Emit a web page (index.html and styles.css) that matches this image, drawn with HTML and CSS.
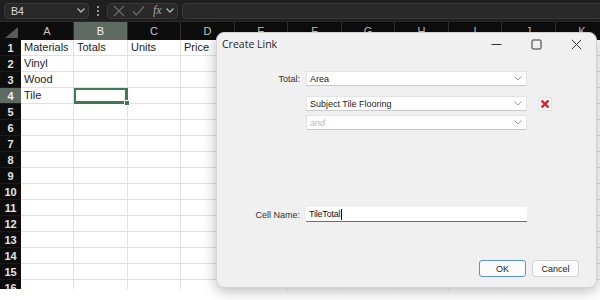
FILE: index.html
```html
<!DOCTYPE html>
<html lang="en">
<head>
    <meta charset="UTF-8">
    <meta name="viewport" content="width=device-width, initial-scale=1.0">
    <title>Create Link</title>
    <link rel="stylesheet" href="styles.css">
</head>
<body>
    <div class="app">
        <!-- Строка формул -->
        <div class="formula-bar">
            <div class="name-box">
                <span>B4</span>
                <svg class="chevron" width="8" height="5" viewBox="0 0 8 5"><path d="M0.5 0.5 L4 4 L7.5 0.5" fill="none" stroke="#b5b5b5" stroke-width="1.3"/></svg>
            </div>
            <div class="more-dots"><i></i><i></i><i></i></div>
            <div class="edit-box">
                <svg width="12" height="12" viewBox="0 0 12 12"><path d="M1 1 L11 11 M11 1 L1 11" stroke="#6a6a6a" stroke-width="1.3"/></svg>
                <svg width="13" height="12" viewBox="0 0 13 12"><path d="M1 6.5 L4.5 10 L12 1.5" fill="none" stroke="#6a6a6a" stroke-width="1.3"/></svg>
                <span class="fx">fx</span>
                <svg class="chevron" width="8" height="5" viewBox="0 0 8 5"><path d="M0.5 0.5 L4 4 L7.5 0.5" fill="none" stroke="#b5b5b5" stroke-width="1.3"/></svg>
            </div>
            <div class="formula-input"></div>
        </div>

        <!-- Лист -->
        <div class="sheet" id="sheet"></div>

        <!-- Диалог -->
        <div class="dialog">
            <div class="dialog-title">
                <span class="dialog-name">Create Link</span>
                <div class="window-controls">
                    <span><svg width="11" height="11" viewBox="0 0 11 11"><path d="M0.5 5.5 H10.5" stroke="#333" stroke-width="1"/></svg></span>
                    <span><svg width="11" height="11" viewBox="0 0 11 11"><rect x="1" y="1" width="9" height="9" rx="1" fill="none" stroke="#333" stroke-width="1"/></svg></span>
                    <span><svg width="11" height="11" viewBox="0 0 11 11"><path d="M0.8 0.8 L10.2 10.2 M10.2 0.8 L0.8 10.2" stroke="#333" stroke-width="1"/></svg></span>
                </div>
            </div>

            <div class="dialog-body">
                <div class="form-row">
                    <label>Total:</label>
                    <div class="select">
                        <span>Area</span>
                        <svg width="8" height="5" viewBox="0 0 8 5"><path d="M0.5 0.5 L4 4 L7.5 0.5" fill="none" stroke="#999" stroke-width="1"/></svg>
                    </div>
                </div>
                <div class="form-row criteria">
                    <span></span>
                    <div class="select">
                        <span>Subject Tile Flooring</span>
                        <svg width="8" height="5" viewBox="0 0 8 5"><path d="M0.5 0.5 L4 4 L7.5 0.5" fill="none" stroke="#999" stroke-width="1"/></svg>
                    </div>
                    <span class="remove">
                        <svg width="10" height="10" viewBox="0 0 10 10"><path d="M1.5 1.5 L8.5 8.5 M8.5 1.5 L1.5 8.5" stroke="#d4202a" stroke-width="2.4"/></svg>
                    </span>
                </div>
                <div class="form-row and-row">
                    <span></span>
                    <div class="select placeholder">
                        <span>and</span>
                        <svg width="8" height="5" viewBox="0 0 8 5"><path d="M0.5 0.5 L4 4 L7.5 0.5" fill="none" stroke="#999" stroke-width="1"/></svg>
                    </div>
                </div>
                <div class="form-row name-row">
                    <label>Cell Name:</label>
                    <div class="text-input">TileTotal<span class="caret"></span></div>
                </div>
            </div>

            <div class="dialog-actions">
                <button class="btn primary">OK</button>
                <button class="btn">Cancel</button>
            </div>
        </div>
    </div>

    <script>
        const letters = ['A', 'B', 'C', 'D', 'E', 'F', 'G', 'H', 'I', 'J', 'K'];
        const data = {
            1: ['Materials', 'Totals', 'Units', 'Price'],
            2: ['Vinyl'],
            3: ['Wood'],
            4: ['Tile']
        };
        const sheet = document.getElementById('sheet');

        // Заголовки столбцов
        const corner = document.createElement('div');
        corner.className = 'corner';
        corner.innerHTML = '<svg width="13" height="11" viewBox="0 0 13 11"><polygon points="13,0 13,11 0,11" fill="#5a5a5a"/></svg>';
        sheet.appendChild(corner);
        letters.forEach(l => {
            const h = document.createElement('div');
            h.className = 'col-head' + (l === 'B' ? ' active' : '');
            h.textContent = l;
            sheet.appendChild(h);
        });

        // Строки
        for (let r = 1; r <= 16; r++) {
            const rh = document.createElement('div');
            rh.className = 'row-head' + (r === 4 ? ' active' : '');
            rh.textContent = r;
            sheet.appendChild(rh);
            letters.forEach((l, i) => {
                const c = document.createElement('div');
                c.className = 'cell';
                if (r === 4 && l === 'B') c.classList.add('selected');
                const values = data[r] || [];
                if (values[i]) c.textContent = values[i];
                sheet.appendChild(c);
            });
        }
    </script>
</body>
</html>
```

FILE: styles.css
```css
body {
    margin: 0;
    background: #fff;
    font-family: "Liberation Sans", Arial, sans-serif;
    overflow: hidden;
}

.app {
    position: relative;
    width: 600px;
    height: 300px;
    overflow: hidden;
}

/* Строка формул */
.formula-bar {
    height: 21px;
    background: #1f1f1f;
    border-bottom: 1px solid #2b2b2b;
    display: flex;
    align-items: center;
    padding-left: 4px;
}

.name-box,
.edit-box,
.formula-input {
    height: 16px;
    box-sizing: border-box;
    background: #292929;
    border: 1px solid #3a3a3a;
    border-radius: 4px;
    display: flex;
    align-items: center;
}

.name-box {
    width: 85px;
    padding: 0 3px 0 6px;
    justify-content: space-between;
    color: #dcdcdc;
    font-size: 10.5px;
}

.more-dots {
    width: 18px;
    display: flex;
    flex-direction: column;
    align-items: center;
    gap: 2px;
}

.more-dots i {
    width: 2px;
    height: 2px;
    background: #bdbdbd;
    border-radius: 50%;
}

.edit-box {
    width: 71px;
    padding: 0 3px 0 5px;
    gap: 7px;
}

.fx {
    font-family: "Liberation Serif", serif;
    font-style: italic;
    font-size: 12px;
    color: #a8a8a8;
    margin-left: 1px;
    margin-right: -3px;
}

.formula-input {
    flex: 1;
    margin-left: 4px;
    margin-right: -10px;
}

/* Лист */
.sheet {
    display: grid;
    grid-template-columns: 21px 53px 54px 53px 54px 53px 54px 53px 54px 53px 54px 53px;
    grid-template-rows: 18px repeat(16, 16px);
    height: 267px;
    overflow: hidden;
}

.corner {
    background: #0d0d0d;
    display: flex;
    align-items: flex-end;
    justify-content: flex-end;
    padding: 0 3px 2px 0;
}

.col-head {
    background: #0d0d0d;
    border-right: 1px solid #2e2e2e;
    color: #c4c4c4;
    font-size: 11px;
    display: flex;
    align-items: center;
    justify-content: center;
}

.row-head {
    background: #0d0d0d;
    border-bottom: 1px solid #1c1c1c;
    color: #e4e4e4;
    font-size: 11px;
    font-weight: bold;
    display: flex;
    align-items: center;
    justify-content: center;
}

.col-head.active,
.row-head.active {
    background: #5e6a62;
    color: #f2f2f2;
}

.cell {
    box-sizing: border-box;
    border-right: 1px solid #e1e1e1;
    border-bottom: 1px solid #e1e1e1;
    padding-left: 3px;
    font-size: 11px;
    line-height: 15px;
    color: #222;
    white-space: nowrap;
}

.cell.selected {
    position: relative;
    box-shadow: inset 0 0 0 2px #3f7a56;
    border-color: #3f7a56;
}

.cell.selected::after {
    content: "";
    position: absolute;
    right: -3px;
    bottom: -3px;
    width: 4px;
    height: 4px;
    background: #3f7a56;
    border: 1px solid #fff;
}

/* Диалог */
.dialog {
    position: absolute;
    left: 216px;
    top: 32px;
    width: 381px;
    height: 256px;
    box-sizing: border-box;
    background: #f0f0f0;
    border: 1px solid #d2d2d2;
    border-radius: 8px;
    box-shadow: 0 3px 14px rgba(0, 0, 0, 0.28);
    display: flex;
    flex-direction: column;
    color: #222;
}

.dialog-title {
    height: 22px;
    display: flex;
    align-items: center;
    justify-content: space-between;
    padding-left: 5px;
}

.dialog-name {
    font-family: "Open Sans", sans-serif;
    font-size: 10.5px;
    color: #262626;
}

.window-controls {
    display: flex;
    align-self: stretch;
}

.window-controls span {
    width: 40px;
    display: flex;
    align-items: center;
    justify-content: center;
}

.dialog-body {
    padding-top: 16px;
}

.form-row {
    display: grid;
    grid-template-columns: 83px 221px 24px;
    column-gap: 6px;
    align-items: center;
    font-size: 9px;
}

.form-row label {
    text-align: right;
    color: #333;
}

.select {
    height: 15px;
    box-sizing: border-box;
    background: #fff;
    border: 1px solid #e4e4e4;
    border-bottom-color: #c9c9c9;
    display: flex;
    align-items: center;
    justify-content: space-between;
    padding: 0 4px 0 3px;
    color: #1a1a1a;
}

.select.placeholder span {
    color: #b9b9b9;
    font-style: italic;
}

.criteria {
    margin-top: 10px;
}

.and-row {
    margin-top: 4px;
}

.remove {
    justify-self: center;
    width: 12px;
    height: 12px;
    display: flex;
    align-items: center;
    justify-content: center;
    background: #f7f7f7;
    border: 1px solid #e2e2e2;
}

.name-row {
    margin-top: 77px;
}

.text-input {
    height: 15px;
    box-sizing: border-box;
    background: #fff;
    border-bottom: 1.5px solid #3a77c0;
    padding-left: 3px;
    display: flex;
    align-items: center;
    color: #111;
    letter-spacing: -0.2px;
}

.caret {
    width: 1px;
    height: 11px;
    background: #111;
    margin-left: 1px;
}

.dialog-actions {
    margin-top: auto;
    display: flex;
    justify-content: flex-end;
    gap: 6px;
    padding: 0 17px 10px 0;
}

.btn {
    width: 47px;
    height: 17px;
    box-sizing: border-box;
    background: #fbfbfb;
    border: 1px solid #d3d3d3;
    border-radius: 3px;
    font-family: "Liberation Sans", Arial, sans-serif;
    font-size: 9px;
    color: #222;
    padding: 0;
}

.btn.primary {
    border-color: #5b93d1;
}
```
